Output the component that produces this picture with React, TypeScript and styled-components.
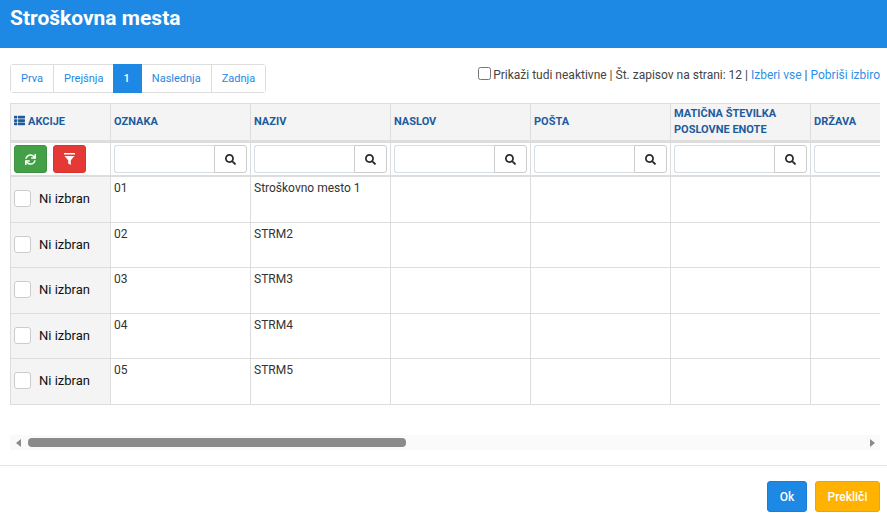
import React from 'react'
import styled, { createGlobalStyle } from 'styled-components'
import { FaThList, FaSync, FaSearch } from 'react-icons/fa'

const GlobalStyle = createGlobalStyle`
  html, body {
    margin: 0;
    padding: 0;
    background: #fff;
    overflow: hidden;
  }
  body {
    font-family: Roboto, "Liberation Sans", sans-serif;
    font-size: 12px;
    color: #222;
  }
  * {
    box-sizing: border-box;
  }
`

const Modal = styled.div`
  width: 887px;
  height: 517px;
  display: flex;
  flex-direction: column;
  overflow: hidden;
`

const Header = styled.header`
  height: 48px;
  flex: none;
  background: #1e88e5;
  padding: 6px 10px 0;
`

const Title = styled.h1`
  margin: 0;
  font-size: 21px;
  line-height: 24px;
  font-weight: 700;
  color: #fff;
`

const Body = styled.main`
  flex: none;
  padding: 16px 7px 0 10px;
`

const Toolbar = styled.div`
  display: flex;
  justify-content: space-between;
  align-items: flex-start;
  height: 29px;
`

const Pager = styled.nav`
  display: flex;
  height: 29px;
  border: 1px solid #ddd;
  border-radius: 3px;
`

const PageLink = styled.a<{ $active?: boolean }>`
  display: flex;
  align-items: center;
  padding: 0 10px;
  font-size: 11px;
  color: ${(p) => (p.$active ? '#fff' : '#1e88e5')};
  background: ${(p) => (p.$active ? '#1e88e5' : '#fff')};
  font-weight: ${(p) => (p.$active ? 500 : 400)};
  border-right: ${(p) => (p.$active ? '0' : '1px solid #ddd')};
  margin: ${(p) => (p.$active ? '-1px 0 -1px -1px' : '0')};
  width: ${(p) => (p.$active ? '28.4px' : 'auto')};

  &:last-child {
    border-right: 0;
  }
`

const Options = styled.div`
  display: flex;
  align-items: center;
  height: 20px;
  margin-top: 1px;
  color: #444;
  white-space: nowrap;
`

const OptionCheck = styled.input`
  width: 13px;
  height: 13px;
  margin: -3px 2px 0 0;
`

const OptionLink = styled.a`
  color: #2f8fe8;
`

const Separator = styled.span`
  white-space: pre;
`

const TableClip = styled.div`
  margin-top: 10px;
  width: 870px;
  overflow: hidden;
`

const Grid = styled.table`
  table-layout: fixed;
  width: 941px;
  border-collapse: separate;
  border-spacing: 0;
`

const HeadCell = styled.th<{ $first?: boolean }>`
  height: 40px;
  padding: 0 3px 1px;
  text-align: left;
  font-size: 11px;
  line-height: 16px;
  font-weight: 700;
  color: #1e5b9e;
  background: #f4f4f4;
  border-top: 1px solid #ddd;
  border-bottom: 3px solid #ddd;
  border-right: 1px solid #ddd;
  border-left: ${(p) => (p.$first ? '1px solid #ddd' : '0')};
`

const HeadIcon = styled(FaThList)`
  width: 11px;
  height: 11px;
  margin-right: 3px;
  vertical-align: -1px;
`

const FilterCell = styled.td<{ $first?: boolean }>`
  height: 34px;
  padding: 2px 3px;
  background: #fff;
  border-bottom: 2px solid #ddd;
  border-right: 1px solid #ddd;
  border-left: ${(p) => (p.$first ? '1px solid #ddd' : '0')};
`

const ActionGroup = styled.div`
  display: flex;
  gap: 6px;
`

const ActionButton = styled.button<{ $tone: string; $edge: string }>`
  width: 33px;
  height: 28px;
  padding: 0;
  display: flex;
  align-items: center;
  justify-content: center;
  color: #fff;
  background: ${(p) => p.$tone};
  border: 1px solid ${(p) => p.$edge};
  border-radius: 3px;
`

const SearchBox = styled.div`
  display: flex;
  width: 133px;
  height: 28px;
`

const SearchInput = styled.input`
  flex: 1;
  min-width: 0;
  height: 100%;
  border: 1px solid #d5dde5;
  border-right: 0;
  border-radius: 3px 0 0 3px;
  background: #fff;
`

const SearchButton = styled.button`
  width: 33px;
  height: 100%;
  padding: 0;
  display: flex;
  align-items: center;
  justify-content: center;
  color: #2b2b2b;
  background: #fff;
  border: 1px solid #ccc;
  border-radius: 0 3px 3px 0;
`

const Row = styled.tr`
  height: 45px;

  &:nth-child(odd) {
    height: 46px;
  }
`

const SelectCell = styled.td`
  padding: 0 3px 2px;
  background: #f4f4f4;
  border-left: 1px solid #ddd;
  border-right: 1px solid #ddd;
  border-bottom: 1px solid #ddd;
`

const SelectLabel = styled.label`
  display: flex;
  align-items: center;
  gap: 8px;
  font-size: 13px;
  color: #111;
`

const FakeCheck = styled.span`
  width: 17px;
  height: 17px;
  background: #fff;
  border: 1px solid #ccc;
  border-radius: 3px;
`

const DataCell = styled.td`
  padding: 3px 3px 0;
  vertical-align: top;
  line-height: 16px;
  color: #333;
  background: #fff;
  border-right: 1px solid #ddd;
  border-bottom: 1px solid #ddd;
`

const ScrollBar = styled.div`
  margin-top: 30px;
  width: 870px;
  height: 15px;
  display: flex;
  align-items: center;
  background: #fafafa;
`

const ScrollArrow = styled.span<{ $right?: boolean }>`
  width: 0;
  height: 0;
  margin: ${(p) => (p.$right ? '0 5px 0 auto' : '0 0 0 6px')};
  border-top: 4px solid transparent;
  border-bottom: 4px solid transparent;
  border-left: ${(p) => (p.$right ? '5px solid #8a8a8a' : '0')};
  border-right: ${(p) => (p.$right ? '0' : '5px solid #8a8a8a')};
`

const ScrollThumb = styled.span`
  width: 378px;
  height: 9px;
  margin-left: 7px;
  background: #8a8a8a;
  border-radius: 4px;
`

const Footer = styled.footer`
  flex: none;
  margin-top: 15px;
  padding: 15px 7px 0 0;
  display: flex;
  justify-content: flex-end;
  gap: 8px;
  border-top: 1px solid #e5e5e5;
`

const FooterButton = styled.button<{ $tone: string; $edge: string; $width: number }>`
  width: ${(p) => p.$width}px;
  height: 31px;
  padding: 0;
  font-family: inherit;
  font-size: 12px;
  font-weight: 500;
  color: #fff;
  background: ${(p) => p.$tone};
  border: 1px solid ${(p) => p.$edge};
  border-radius: 3px;
`

const columns = ['OZNAKA', 'NAZIV', 'NASLOV', 'POŠTA', 'MATIČNA ŠTEVILKA POSLOVNE ENOTE', 'DRŽAVA']

const rows = [
  ['01', 'Stroškovno mesto 1'],
  ['02', 'STRM2'],
  ['03', 'STRM3'],
  ['04', 'STRM4'],
  ['05', 'STRM5'],
]

const App: React.FC = () => {
  return (
    <Modal>
      <GlobalStyle />
      <Header>
        <Title>Stroškovna mesta</Title>
      </Header>

      <Body>
        <Toolbar>
          <Pager>
            <PageLink>Prva</PageLink>
            <PageLink>Prejšnja</PageLink>
            <PageLink $active>1</PageLink>
            <PageLink>Naslednja</PageLink>
            <PageLink>Zadnja</PageLink>
          </Pager>
          <Options>
            <OptionCheck type="checkbox" />
            <span>Prikaži tudi neaktivne | Št. zapisov na strani: 12 |&nbsp;</span>
            <OptionLink>Izberi vse</OptionLink>
            <Separator> | </Separator>
            <OptionLink>Pobriši izbiro</OptionLink>
          </Options>
        </Toolbar>

        <TableClip>
          <Grid>
            <colgroup>
              <col width={101} />
              {columns.map((c) => (
                <col key={c} width={140} />
              ))}
            </colgroup>
            <thead>
              <tr>
                <HeadCell $first>
                  <HeadIcon />
                  AKCIJE
                </HeadCell>
                {columns.map((c) => (
                  <HeadCell key={c}>{c}</HeadCell>
                ))}
              </tr>
              <tr>
                <FilterCell $first>
                  <ActionGroup>
                    <ActionButton $tone="#43a047" $edge="#3d9141">
                      <FaSync size={11} />
                    </ActionButton>
                    <ActionButton $tone="#e53935" $edge="#d9342f">
                      <svg width="11" height="12" viewBox="0 0 11 12" fill="#fff">
                        <rect x="0" y="0" width="11" height="1.5" />
                        <path d="M0.5 3h10L6.8 7.2V12L4.2 10.4V7.2z" />
                      </svg>
                    </ActionButton>
                  </ActionGroup>
                </FilterCell>
                {columns.map((c) => (
                  <FilterCell key={c}>
                    <SearchBox>
                      <SearchInput type="text" />
                      <SearchButton>
                        <FaSearch size={11} />
                      </SearchButton>
                    </SearchBox>
                  </FilterCell>
                ))}
              </tr>
            </thead>
            <tbody>
              {rows.map(([code, name]) => (
                <Row key={code}>
                  <SelectCell>
                    <SelectLabel>
                      <FakeCheck />
                      Ni izbran
                    </SelectLabel>
                  </SelectCell>
                  <DataCell>{code}</DataCell>
                  <DataCell>{name}</DataCell>
                  {columns.slice(2).map((c) => (
                    <DataCell key={c} />
                  ))}
                </Row>
              ))}
            </tbody>
          </Grid>
        </TableClip>

        <ScrollBar>
          <ScrollArrow />
          <ScrollThumb />
          <ScrollArrow $right />
        </ScrollBar>
      </Body>

      <Footer>
        <FooterButton $tone="#1e88e5" $edge="#1b7ed6" $width={40}>
          Ok
        </FooterButton>
        <FooterButton $tone="#ffb300" $edge="#eda600" $width={65}>
          Prekliči
        </FooterButton>
      </Footer>
    </Modal>
  )
}

export default App
